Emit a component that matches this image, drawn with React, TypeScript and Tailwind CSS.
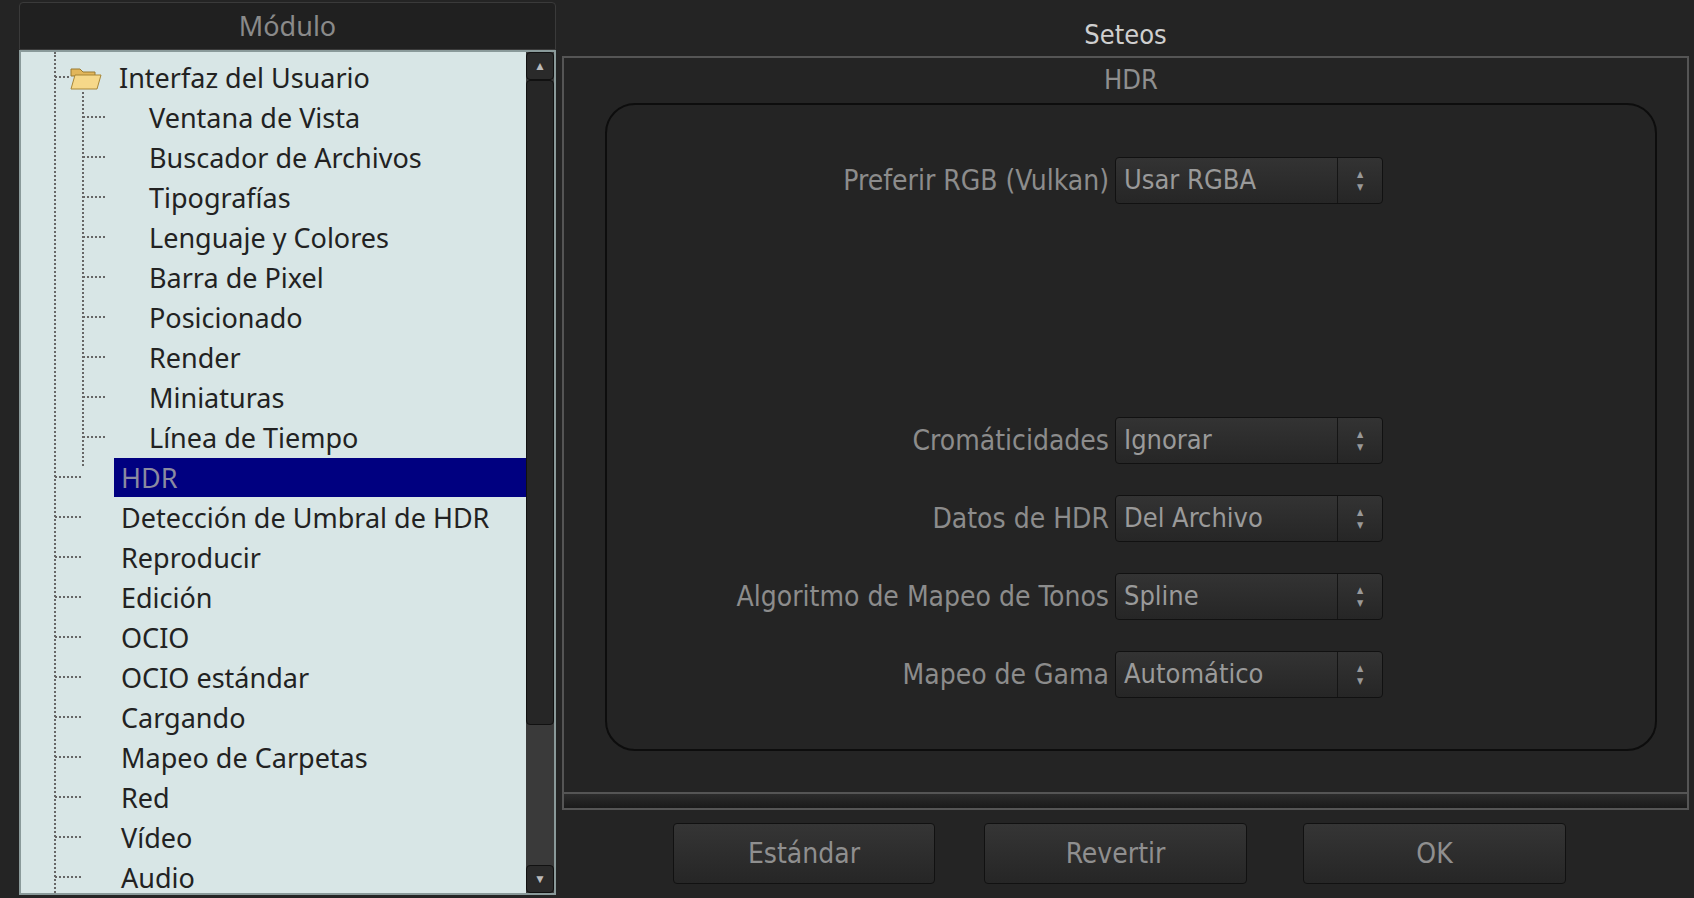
import React from 'react';

const children = ['Ventana de Vista', 'Buscador de Archivos', 'Tipografías', 'Lenguaje y Colores', 'Barra de Pixel', 'Posicionado', 'Render', 'Miniaturas', 'Línea de Tiempo'];
const tops = ['HDR', 'Detección de Umbral de HDR', 'Reproducir', 'Edición', 'OCIO', 'OCIO estándar', 'Cargando', 'Mapeo de Carpetas', 'Red', 'Vídeo', 'Audio'];

const cond = { fontFamily: '"DejaVu Sans Condensed", "DejaVu Sans", sans-serif' };

function Combo({ value }: { value: string }) {
    return (
        <div className="flex h-[47px] w-[268px] rounded-[4px] border border-[#111] bg-gradient-to-b from-[#333] to-[#262626] text-[27px] text-[#9a9a9a]" style={cond}>
            <div className="flex flex-1 items-center pl-2">{value}</div>
            <div className="flex w-[45px] flex-col items-center justify-center gap-[4px] border-l border-[#151515] text-[9px] leading-none text-[#999]">
                <span>▲</span>
                <span>▼</span>
            </div>
        </div>
    );
}

function Row({ label, value }: { label: string; value: string }) {
    return (
        <div className="flex items-center">
            <div className="w-[508px] pr-[6px] text-right text-[28px] text-[#8c8c8c]" style={cond}>{label}</div>
            <Combo value={value} />
        </div>
    );
}

function Button({ label, w }: { label: string; w: string }) {
    return (
        <div className={`flex h-[61px] items-center justify-center rounded-[4px] border border-[#111] bg-gradient-to-b from-[#353535] to-[#262626] text-[28px] text-[#8f8f8f] ${w}`} style={cond}>
            {label}
        </div>
    );
}

export default function App() {
    return (
        <div className="flex h-[898px] w-[1694px] overflow-hidden bg-[#242424]" style={{ fontFamily: '"Noto Sans", sans-serif' }}>
            {/* Left: module tree */}
            <div className="ml-[19px] mt-[2px] flex h-[893px] w-[537px] flex-col">
                <div className="flex h-[48px] items-center justify-center rounded-t-[4px] border border-[#3a3a3a] bg-[#202020] text-[27px] text-[#8a8a8a]">Módulo</div>
                <div className="flex flex-1 overflow-hidden border-2 border-[#8a9a9a] bg-[#d8e6e6]">
                    <div className="relative flex-1 overflow-hidden pt-[5px] text-[27px] leading-none text-[#222]">
                        <div className="absolute left-[33px] top-[0px] h-[900px] border-l-2 border-dotted border-[#666]" />
                        <div className="absolute left-[61px] top-[40px] h-[374px] border-l-2 border-dotted border-[#666]" />
                        <div className="relative flex h-[40px] items-center">
                            <div className="ml-[34px] w-[14px] border-t-2 border-dotted border-[#666]" />
                            <svg width="34" height="28" viewBox="0 0 34 28" className="mr-[16px]">
                                <path d="M2 6 h9 l3 3 h12 v4 H2 z" fill="#e2b65a" stroke="#9a7a30" />
                                <path d="M2 26 L6 12 H32 L28 26 z" fill="#f6d889" stroke="#a88636" />
                            </svg>
                            <span>Interfaz del Usuario</span>
                        </div>
                        {children.map((c) => (
                            <div key={c} className="relative flex h-[40px] items-center">
                                <div className="ml-[62px] w-[22px] border-t-2 border-dotted border-[#666]" />
                                <span className="ml-[44px]">{c}</span>
                            </div>
                        ))}
                        {tops.map((t) => (
                            <div key={t} className="relative flex h-[40px] items-center">
                                <div className="ml-[34px] w-[26px] border-t-2 border-dotted border-[#666]" />
                                {t === 'HDR' ? (
                                    <span className="ml-[33px] flex h-[39px] flex-1 items-center bg-[#000080] pl-[7px] text-[#8a8aa0]">{t}</span>
                                ) : (
                                    <span className="ml-[40px] whitespace-nowrap">{t}</span>
                                )}
                            </div>
                        ))}
                    </div>
                    <div className="flex w-[28px] flex-col bg-[#3a3a3a]">
                        <div className="flex h-[28px] items-center justify-center rounded-[4px] border border-[#111] bg-[#2a2a2a] text-[12px] text-[#bbb]">▲</div>
                        <div className="h-[645px] rounded-[4px] border border-[#111] bg-[#262626]" />
                        <div className="flex-1" />
                        <div className="flex h-[28px] items-center justify-center rounded-[4px] border border-[#111] bg-[#2a2a2a] text-[12px] text-[#bbb]">▼</div>
                    </div>
                </div>
            </div>

            {/* Right: settings */}
            <div className="ml-[6px] flex w-[1127px] flex-col">
                <div className="flex h-[56px] items-center justify-center pt-[14px] text-[27px] text-[#cfcfcf]" style={cond}>Seteos</div>
                <div className="flex h-[738px] flex-col border-2 border-[#555] pl-[41px] pr-[30px]">
                    <div className="flex h-[45px] items-center justify-center text-[27px] text-[#8f8f8f]" style={cond}>HDR</div>
                    <div className="flex h-[648px] flex-col rounded-[30px] border-2 border-[#0d0d0d] pt-[52px]">
                        <Row label="Preferir RGB (Vulkan)" value="Usar RGBA" />
                        <div className="h-[213px]" />
                        <div className="flex flex-col gap-[31px]">
                            <Row label="Cromáticidades" value="Ignorar" />
                            <Row label="Datos de HDR" value="Del Archivo" />
                            <Row label="Algoritmo de Mapeo de Tonos" value="Spline" />
                            <Row label="Mapeo de Gama" value="Automático" />
                        </div>
                    </div>
                </div>
                <div className="h-[16px] border-x-2 border-b-2 border-[#555] bg-gradient-to-b from-[#2c2c2c] to-[#1a1a1a]" />
                <div className="mt-[13px] flex">
                    <div className="ml-[111px]"><Button label="Estándar" w="w-[262px]" /></div>
                    <div className="ml-[49px]"><Button label="Revertir" w="w-[263px]" /></div>
                    <div className="ml-[56px]"><Button label="OK" w="w-[263px]" /></div>
                </div>
            </div>
        </div>
    );
}
